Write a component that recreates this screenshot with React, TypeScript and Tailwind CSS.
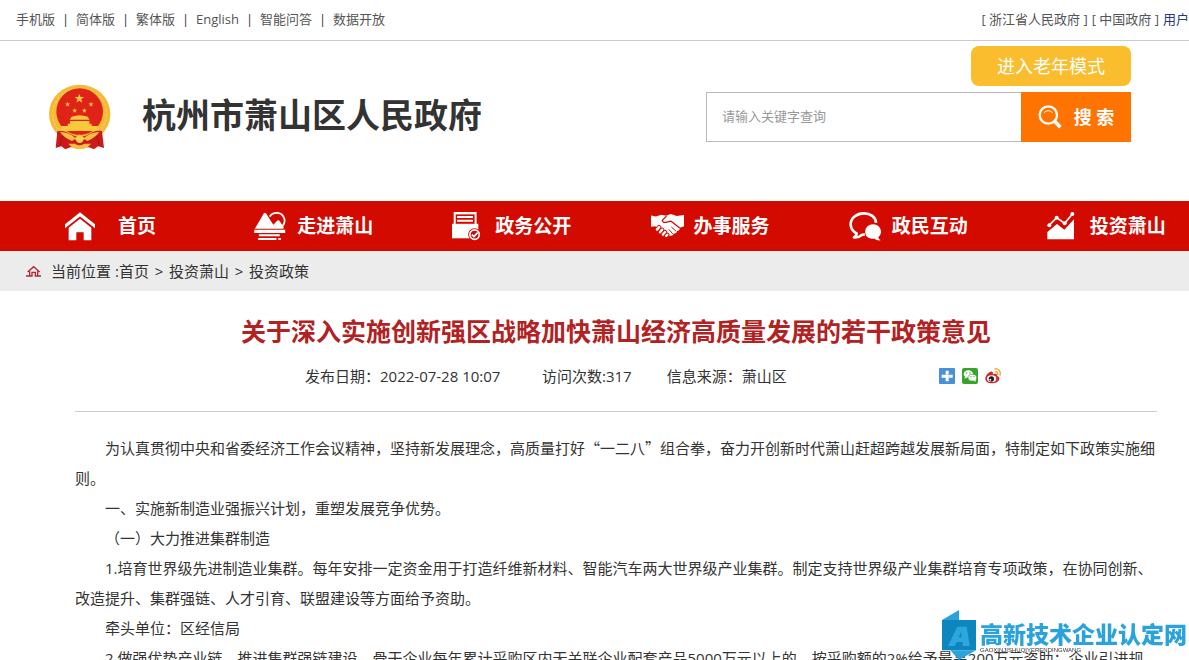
const HomeIcon = () => (
  <svg viewBox="0 0 90 86" className="w-[30px] h-[29px]" fill="#fff" aria-hidden="true">
    <path d="M45 0 90 36v12L45 13 0 48V36z" />
    <path d="M45 20 79 47v37H56V60H34v24H11V47z" />
  </svg>
);

const MountainIcon = () => (
  <svg viewBox="0 0 94 86" className="w-8 h-[29px]" fill="#fff" aria-hidden="true">
    <path d="M2 50 28 5q4-5 8 0l13 21 8 12 11-12q4-3 7 0l13 20-2 4z" />
    <path d="M46 14C54-1 78-2 87 14c6 11 3 21-3 28" fill="none" stroke="#fff" strokeWidth="5" />
    <path d="M0 53h92v9H0zM14 66h62v6H14z" />
    <path d="M14 80h50M74 80h3" stroke="#fff" strokeWidth="6" strokeLinecap="round" />
  </svg>
);

const DocumentIcon = () => (
  <svg viewBox="0 0 86 86" className="w-[29px] h-[29px]" fill="#fff" aria-hidden="true">
    <path d="M5 0h68v40H5z" />
    <path d="M11 7h56v29H11z" fill="#d20a00" />
    <path d="M15 12h47v6H15zM15 23h47v6H15z" />
    <path d="M0 35h78v43H0z" />
    <circle cx="67" cy="67" r="19" fill="#d20a00" />
    <circle cx="67" cy="67" r="14" stroke="#fff" strokeWidth="5" fill="#d20a00" />
    <path d="m59 67 6 6 11-12" fill="none" stroke="#fff" strokeWidth="5" />
  </svg>
);

const HandshakeIcon = () => (
  <svg viewBox="0 0 100 72" className="w-[33px] h-6 shrink-0" aria-hidden="true">
    <path
      d="M0 4 14 7 32 2 46 5 60 0 78 6 100 3v34l-13 4q1 9-8 10-1 9-10 8-3 9-12 6-6 6-11 1L22 42 12 37 0 38z"
      fill="#fff"
    />
    <path d="M47 6 34 19q3 9 14 5l12-3 27 21" fill="none" stroke="#d20a00" strokeWidth="4" strokeLinejoin="round" />
    <path d="m62 39 14 13M54 46l12 14" fill="none" stroke="#d20a00" strokeWidth="3" />
    <g stroke="#d20a00" strokeWidth="3" fill="#fff">
      <rect x="-5" y="-10" width="11" height="20" rx="5" transform="translate(21 43) rotate(42)" />
      <rect x="-5" y="-10" width="11" height="20" rx="5" transform="translate(30 51) rotate(42)" />
      <rect x="-5" y="-10" width="11" height="20" rx="5" transform="translate(39 58) rotate(42)" />
      <rect x="-5" y="-7" width="10" height="15" rx="5" transform="translate(48 64) rotate(42)" />
    </g>
  </svg>
);

const ChatIcon = () => (
  <svg viewBox="0 0 98 88" className="w-[33px] h-[29px] shrink-0" aria-hidden="true">
    <path
      d="M81 33C80 15 64 4 44 4 22 4 4 18 4 37c0 13 7 22 18 28 0 6-3 9-8 12 10 1 18-2 23-7l10-2"
      fill="none"
      stroke="#fff"
      strokeWidth="8"
      strokeLinejoin="round"
    />
    <path d="M72 37c13 0 24 9 24 23 0 7-3 12-8 16 0 5 3 7 7 10-8 1-14-1-18-5-17 2-29-6-29-21 0-14 11-23 24-23z" fill="#fff" />
  </svg>
);

const ChartIcon = () => (
  <svg viewBox="0 0 82 84" className="w-7 h-7" fill="#fff" aria-hidden="true">
    <path d="M0 60 29 36l22 17 29-31v60H0z" />
    <path d="m6 39 22-22 24 17L75 6" fill="none" stroke="#fff" strokeWidth="5" />
    <circle cx="6" cy="40" r="6" />
    <circle cx="28" cy="17" r="6" />
    <circle cx="52" cy="34" r="6" />
    <circle cx="75" cy="6" r="6" />
  </svg>
);

const STAR = "M0-10 2.4-3.2 9.5-3.1 3.8 1.2 5.9 8.1 0 4-5.9 8.1-3.8 1.2-9.5-3.1-2.4-3.2z";

const stars = [
  { x: 118, y: 68, scale: 1.5 },
  { x: 83, y: 85, scale: 0.8 },
  { x: 104, y: 104, scale: 0.8 },
  { x: 133, y: 104, scale: 0.8 },
  { x: 153, y: 85, scale: 0.8 },
];

const Emblem = () => (
  <svg viewBox="24 24 189 201" className="w-[63px] h-[67px]" role="img" aria-label="国徽">
    <ellipse cx="119" cy="114" rx="92" ry="88" fill="#f4b935" />
    <ellipse cx="119" cy="114" rx="81" ry="77" fill="none" stroke="#f8c94a" strokeWidth="5" strokeDasharray="10 4" />
    <circle cx="119" cy="107" r="70" fill="#df2319" />
    {stars.map((s, i) => (
      <path key={i} d={STAR} fill="#f9c93c" transform={`translate(${s.x} ${s.y}) scale(${s.scale})`} />
    ))}
    <path d="M95 122q24-9 48 0l6 9H89zM90 135h58v8h7v7H83v-7h7zM64 150h110l4 15H60z" fill="#f9c93c" />
    <path d="M52 166c18-4 28 2 38 8q30 18 58 0c12-7 22-12 38-8l6 50-18-5-12 9-15-6H91l-15 6-12-9-17 5z" fill="#cc1a1b" />
    <path d="M60 168q30 2 45 17l14-10 14 10q16-15 45-17-13 18-36 27l-8-5-15 9-15-9-8 5q-23-9-36-27z" fill="#f8bf40" />
    <path d="M85 203h20q13 9 28 0h20l-12 12q-22 9-44 0z" fill="#f8bf40" />
    <circle cx="119" cy="190" r="11" fill="#f9cf4e" />
    <path d="m67 180-7 30M171 180l7 30" stroke="#a81217" strokeWidth="3" />
  </svg>
);

const SearchIcon = () => (
  <svg viewBox="0 0 70 72" className="w-6 h-6" fill="none" stroke="#fff" aria-hidden="true">
    <circle cx="30" cy="30" r="26" strokeWidth="7" />
    <path d="M17 23q12-12 26 0" strokeWidth="3" />
    <path d="m49 49 17 18" strokeWidth="11" />
  </svg>
);

const PlusShare = () => (
  <svg viewBox="0 0 48 48" className="w-4 h-4" aria-hidden="true">
    <rect width="48" height="48" rx="3" fill="#4a90d9" />
    <path d="M20 8h9v12h12v9H29v11h-9V29H8v-9h12z" fill="#fff" />
    <path d="M20 19h10v10" fill="none" stroke="#4a90d9" strokeWidth="1" />
  </svg>
);

const WechatShare = () => (
  <svg viewBox="0 0 48 48" className="w-4 h-4" aria-hidden="true">
    <rect width="48" height="48" rx="6" fill="#37a32a" />
    <ellipse cx="19" cy="18" rx="14" ry="11" fill="#fff" />
    <path d="m9 23-1 9 9-5z" fill="#fff" />
    <ellipse cx="31" cy="29" rx="13" ry="10" fill="#fff" stroke="#37a32a" strokeWidth="2" />
    <path d="m34 36 7 6-1-9z" fill="#fff" />
    <circle cx="14" cy="15" r="2" fill="#37a32a" />
    <circle cx="24" cy="15" r="2" fill="#37a32a" />
    <circle cx="27" cy="26" r="2" fill="#37a32a" />
    <circle cx="36" cy="26" r="2" fill="#37a32a" />
  </svg>
);

const WeiboShare = () => (
  <svg viewBox="0 0 48 48" className="w-4 h-4" aria-hidden="true">
    <path d="M1 32C1 22 14 9 21 11c4 1 3 5 2 8 7-3 14-3 13 5 6 2 8 5 7 9-2 8-11 13-22 13S1 41 1 32z" fill="#d8232a" />
    <ellipse cx="20" cy="32" rx="14" ry="10" fill="#fff" />
    <circle cx="19" cy="33" r="8" fill="#1b1b1b" />
    <circle cx="16" cy="35" r="3" fill="#fff" />
    <path d="M30 3c11-2 18 7 15 18M31 11c5-1 8 3 7 8" fill="none" stroke="#f0a02c" strokeWidth="4" strokeLinecap="round" />
  </svg>
);

const languageLinks = ["手机版", "简体版", "繁体版", "English", "智能问答", "数据开放"];

const navItems = [
  { label: "首页", icon: <HomeIcon />, spacing: "pl-[65px] gap-[21px]" },
  { label: "走进萧山", icon: <MountainIcon />, spacing: "pl-14 gap-[11px]" },
  { label: "政务公开", icon: <DocumentIcon />, spacing: "pl-14 gap-[11px]" },
  { label: "办事服务", icon: <HandshakeIcon />, spacing: "pl-14 gap-[11px]" },
  { label: "政民互动", icon: <ChatIcon />, spacing: "pl-14 gap-[11px]" },
  { label: "投资萧山", icon: <ChartIcon />, spacing: "pl-14 gap-[11px]" },
];

const crumbs = ["首页", "投资萧山", "投资政策"];

const shares = [
  { label: "分享", icon: <PlusShare /> },
  { label: "微信", icon: <WechatShare /> },
  { label: "微博", icon: <WeiboShare /> },
];

const intro =
  "为认真贯彻中央和省委经济工作会议精神，坚持新发展理念，高质量打好“一二八”组合拳，奋力开创新时代萧山赶超跨越发展新局面，特制定如下政策实施细则。";

const paragraphs = [
  "一、实施新制造业强振兴计划，重塑发展竞争优势。",
  "（一）大力推进集群制造",
  "1.培育世界级先进制造业集群。每年安排一定资金用于打造纤维新材料、智能汽车两大世界级产业集群。制定支持世界级产业集群培育专项政策，在协同创新、改造提升、集群强链、人才引育、联盟建设等方面给予资助。",
  "牵头单位：区经信局",
  "2.做强优势产业链。推进集群强链建设。骨干企业每年累计采购区内无关联企业配套产品5000万元以上的，按采购额的2%给予最高200万元资助；企业引进规",
];

const TopBar = () => (
  <div className="flex h-[41px] items-center justify-between border-b border-[#ccc] pl-4 text-[13px] text-[#555]">
    <ul className="flex">
      {languageLinks.map((item, i) => (
        <li key={item} className="flex">
          {i > 0 && <span className="w-[21px] text-center text-[#333]">|</span>}
          <a href="#">{item}</a>
        </li>
      ))}
    </ul>
    <div className="flex gap-1 whitespace-nowrap">
      <a href="#">[ 浙江省人民政府 ]</a>
      <a href="#">[ 中国政府 ]</a>
      <a href="#" className="text-[#1f3d7a]">用户</a>
    </div>
  </div>
);

const Header = () => (
  <header className="flex h-40 justify-between pl-12 pr-[58px]">
    <div className="flex items-center gap-[31px] pb-2">
      <Emblem />
      <div className="pb-1 text-[34px] font-bold leading-[50px] text-[#333]">杭州市萧山区人民政府</div>
    </div>
    <div className="flex flex-col items-end gap-[6px] pt-[5px]">
      <button type="button" className="h-10 w-40 rounded-lg bg-[#f9bd2e] text-[18px] text-white">
        进入老年模式
      </button>
      <form className="flex h-[50px]" onSubmit={(e) => e.preventDefault()}>
        <input
          type="text"
          aria-label="搜索关键字"
          placeholder="请输入关键字查询"
          className="w-[315px] border border-r-0 border-[#bbb] px-[15px] text-[13px] outline-none placeholder:text-[#999]"
        />
        <button type="submit" className="flex w-[110px] items-center justify-center gap-3 bg-[#ff7300] text-[18px] font-bold text-white">
          <SearchIcon />
          <span>搜 索</span>
        </button>
      </form>
    </div>
  </header>
);

const Nav = () => (
  <nav className="grid h-[50px] grid-cols-6 bg-[#d20a00]">
    {navItems.map((item) => (
      <a key={item.label} href="#" className={`flex items-center ${item.spacing}`}>
        <span className="flex w-8 shrink-0">{item.icon}</span>
        <span className="whitespace-nowrap text-[19px] font-bold text-white">{item.label}</span>
      </a>
    ))}
  </nav>
);

const Breadcrumb = () => (
  <div className="flex h-10 items-center bg-[#ececec] pl-[26px] text-[15px] text-[#333]">
    <svg viewBox="0 0 45 36" className="mr-[10px] h-3 w-[15px]" fill="none" stroke="#b3282d" strokeWidth="4" aria-hidden="true">
      <path d="M5 21 23 5l18 16M11 19v13M35 19v13M0 33h18V22h10v11h17" />
    </svg>
    <span className="mr-1">当前位置</span>
    <span>:</span>
    {crumbs.map((crumb, i) => (
      <span key={crumb} className="flex">
        {i > 0 && <span className="w-5 text-center">&gt;</span>}
        <a href="#">{crumb}</a>
      </span>
    ))}
  </div>
);

const Article = () => (
  <article className="pl-[75px] pr-8 pt-5 text-[15px] leading-[30px] text-[#333]">
    <h1 className="text-center text-[25px] font-bold leading-10 text-[#b22222]">
      关于深入实施创新强区战略加快萧山经济高质量发展的若干政策意见
    </h1>
    <div className="mt-[10px] flex items-center border-b border-[#ccc] pb-5 pl-[230px]">
      <div className="flex gap-[35px]">
        <span className="min-w-[202px]">发布日期：2022-07-28 10:07</span>
        <span>访问次数:317</span>
        <span>信息来源：萧山区</span>
      </div>
      <div className="ml-[152px] flex gap-[7px]">
        {shares.map((share) => (
          <a key={share.label} href="#" aria-label={share.label}>
            {share.icon}
          </a>
        ))}
      </div>
    </div>
    <div className="pt-[21px] indent-[30px]">
      {/* CJK face here keeps the quotation marks full width */}
      <p className="font-['Noto_Sans_CJK_SC',sans-serif]">{intro}</p>
      {paragraphs.map((text, i) => (
        <p key={i}>{text}</p>
      ))}
    </div>
  </article>
);

const Watermark = () => (
  <div className="fixed bottom-0 right-[2px] flex h-[50px] gap-1">
    <svg viewBox="0 0 102 150" className="h-[50px] w-[34px]" role="img" aria-label="A">
      <path d="M0 30 51 0v30H0z" fill="#2aa3dc" />
      <path d="M0 30h102v91H0z" fill="#0d86bd" />
      <path d="M18 108 46 50h28l9 58H63l-2-12H44l-6 12zM50 82h9l-2-17z" fill="#2ea6dd" />
      <path d="M25 121h77l-51 29z" fill="#2aa3dc" />
    </svg>
    <div className="flex flex-col pt-3">
      <span className="text-[23px] font-black leading-[24px] text-[#2aa3dc]">高新技术企业认定网</span>
      <span className="font-['Liberation_Sans',sans-serif] text-[6px] leading-[8px] text-[#333]">GAOXINJISHUQIYERENDINGWANG</span>
    </div>
  </div>
);

const App = () => {
  return (
    <div lang="zh-CN" className="h-screen overflow-hidden bg-white font-['Open_Sans','Noto_Sans_CJK_SC',sans-serif]">
      <TopBar />
      <Header />
      <Nav />
      <Breadcrumb />
      <Article />
      <Watermark />
    </div>
  );
};

export default App;
